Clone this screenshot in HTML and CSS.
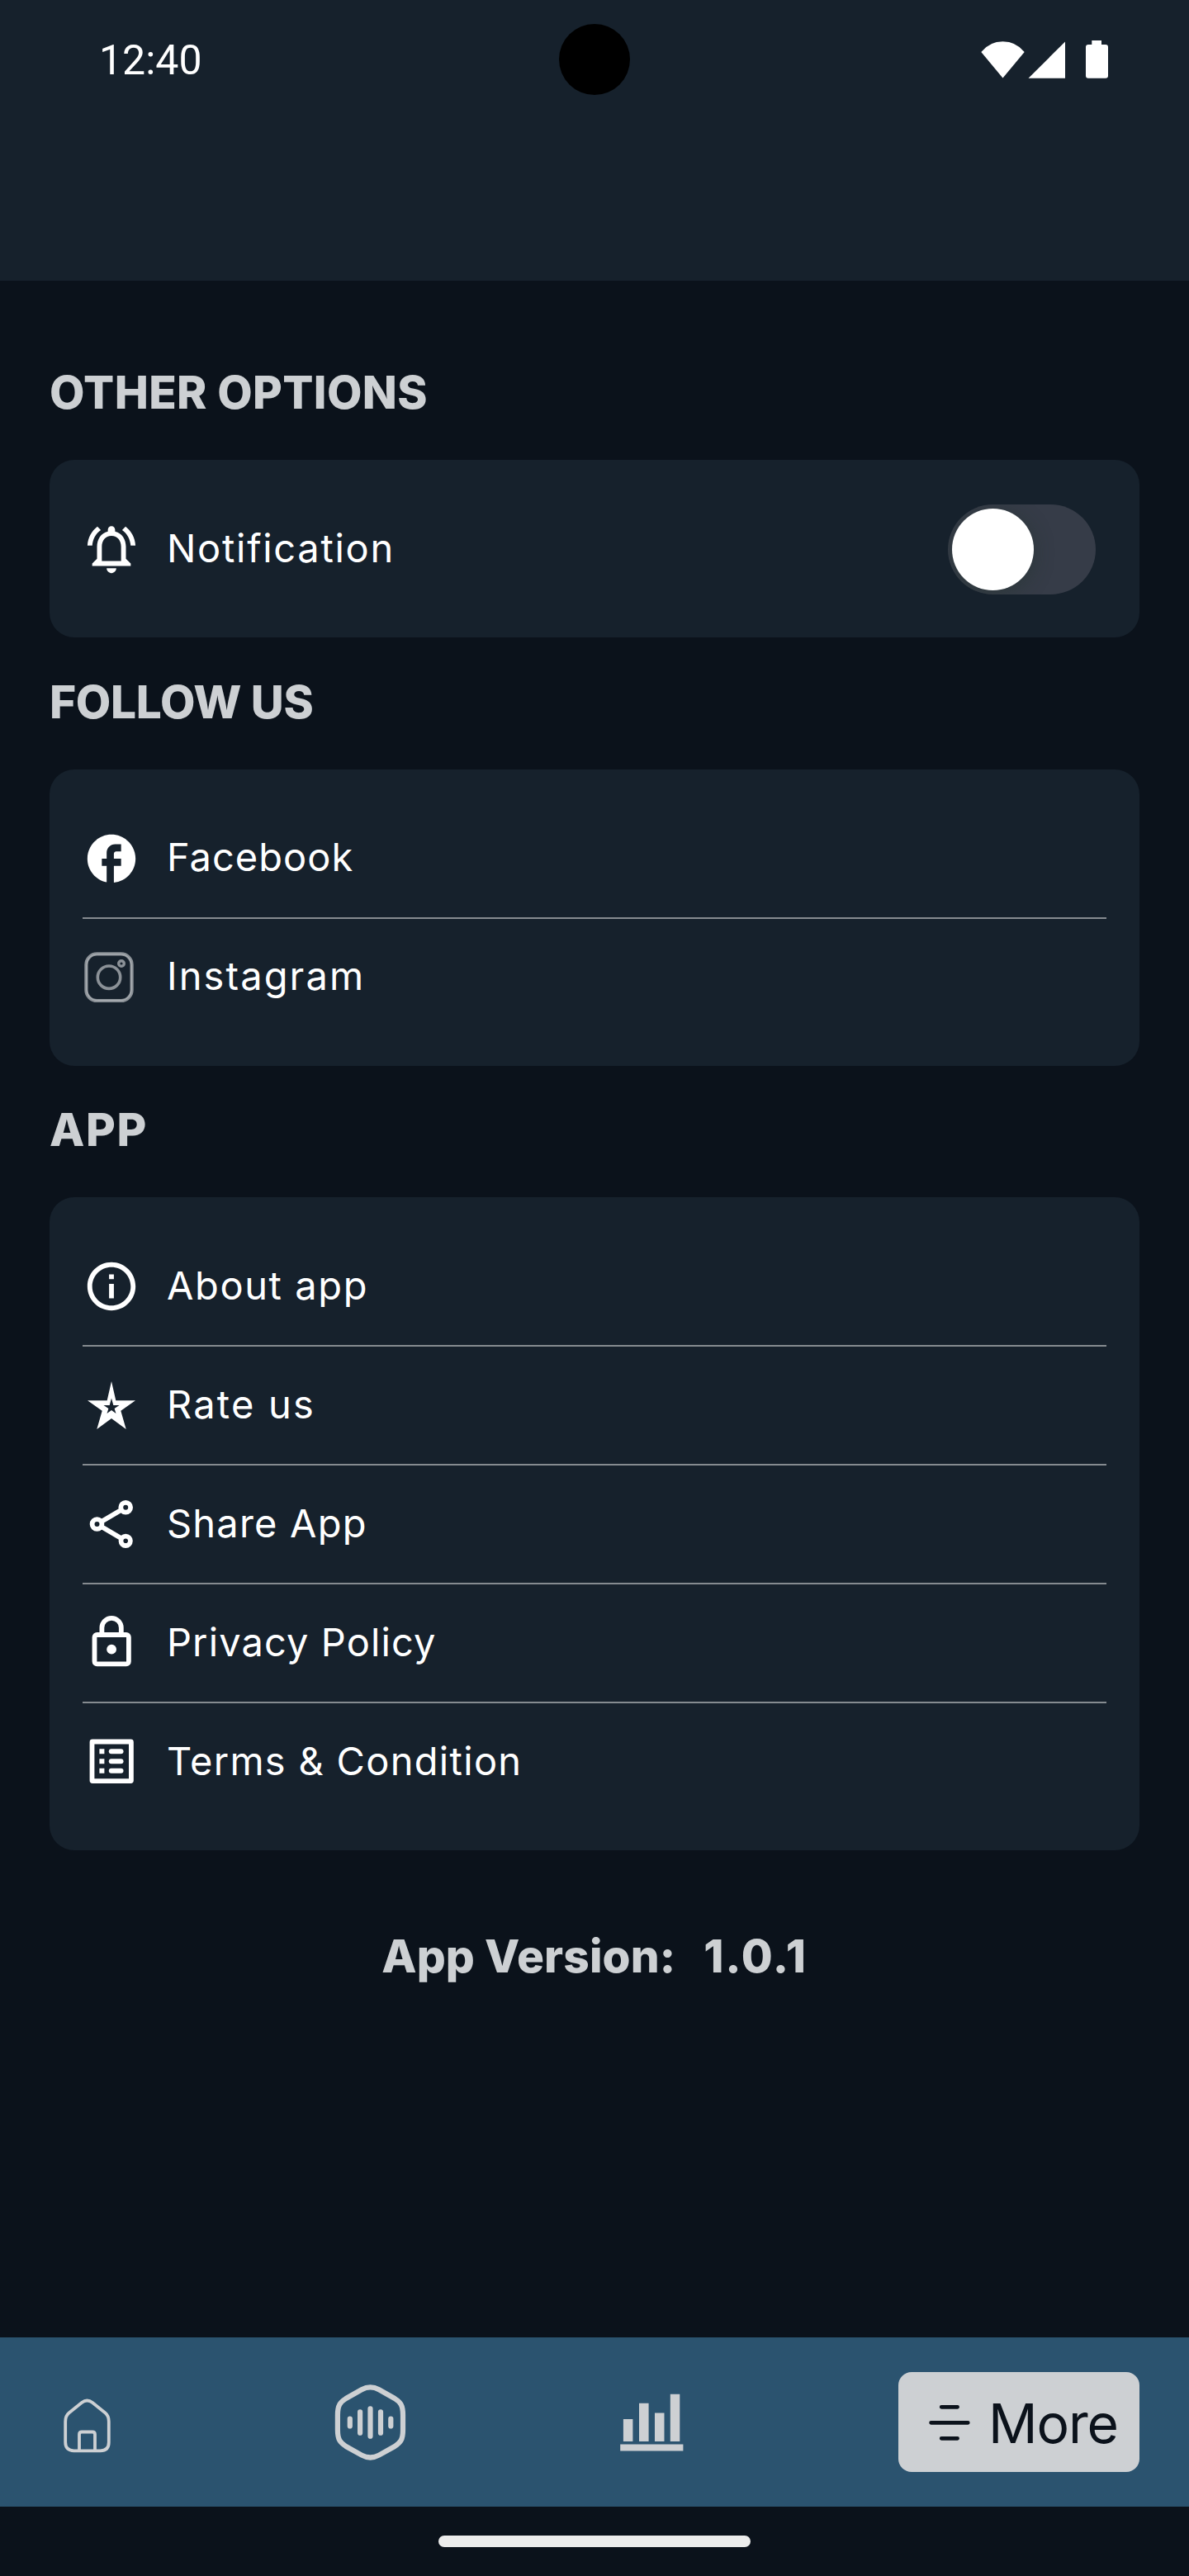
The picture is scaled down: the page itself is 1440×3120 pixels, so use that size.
FILE: index.html
```
<!DOCTYPE html>
<html lang="en">
<head>
<meta charset="utf-8">
<title>More</title>
<link rel="stylesheet" href="styles.css">
</head>
<body>
<div class="screen">
  <header class="top">
    <div class="status">
      <span class="time">12:40</span>
      <svg class="status-icons" width="156" height="50" viewBox="0 0 156 50" fill="#fff">
        <path d="M0.3 16Q10.500 3.300 26.500 3.300T52.700 16L26.500 47.600Z"/>
        <path d="M102 3.500V47.700H57.500Z"/>
        <path d="M134.300 2h11.700v5h5q3 0 3 3v34.700q0 3-3 3h-21q-3 0-3-3V10q0-3 3-3h4.300z"/>
      </svg>
      <div class="camera"></div>
    </div>
  </header>

  <main class="content">
    <h2 class="heading heading-other">OTHER OPTIONS</h2>
    <section class="card">
      <div class="row">
        <svg class="icon" viewBox="0 0 24 24"><path d="M12 22c1.100 0 2-.9 2-2h-4c0 1.100.9 2 2 2zm6-6v-5c0-3.070-1.630-5.640-4.500-6.320V4c0-.83-.67-1.500-1.500-1.500s-1.500.67-1.500 1.500v.68C7.640 5.360 6 7.920 6 11v5l-2 2v1h16v-1l-2-2zm-2 1H8v-6c0-2.480 1.510-4.500 4-4.500s4 2.020 4 4.500v6zM7.580 4.080L6.150 2.650C3.750 4.480 2.170 7.300 2.030 10.500h2c.15-2.650 1.510-4.970 3.550-6.420zm12.390 6.420h2c-.15-3.200-1.730-6.020-4.120-7.850l-1.420 1.430c2.020 1.450 3.390 3.770 3.540 6.420z"/></svg>
        <span class="label label-notification">Notification</span>
        <div class="toggle"><div class="thumb"></div></div>
      </div>
    </section>

    <h2 class="heading heading-follow">FOLLOW US</h2>
    <section class="card">
      <div class="row">
        <svg class="icon" viewBox="0 0 24 24"><path d="M22 12c0-5.520-4.480-10-10-10S2 6.480 2 12c0 4.840 3.440 8.870 8 9.800V15H8v-3h2V9.500C10 7.570 11.570 6 13.500 6H16v3h-2c-.55 0-1 .45-1 1v2h3v3h-3v6.950c5.050-.5 9-4.760 9-9.950z"/></svg>
        <span class="label label-facebook">Facebook</span>
      </div>
      <div class="row">
        <svg class="icon" viewBox="0 0 70 70" fill="none">
          <g fill="none" stroke="#8b9197" stroke-width="4.200">
            <rect x="4.400" y="6.400" width="55.200" height="56.600" rx="13"/>
            <circle cx="32" cy="34.700" r="13.700" stroke-width="3.600"/>
            <circle cx="47" cy="18" r="3.300" stroke-width="3.400"/>
          </g>
          <rect x="4.800" y="6.800" width="54.400" height="55.800" rx="12.600" fill="none" stroke="#b4b8bc" stroke-width="1"/>
        </svg>
        <span class="label label-instagram">Instagram</span>
      </div>
    </section>

    <h2 class="heading heading-app">APP</h2>
    <section class="card">
      <div class="row">
        <svg class="icon" viewBox="0 0 24 24"><path d="M11 7h2v2h-2zm0 4h2v6h-2zm1-9C6.480 2 2 6.480 2 12s4.480 10 10 10 10-4.480 10-10S17.520 2 12 2zm0 18c-4.410 0-8-3.590-8-8s3.590-8 8-8 8 3.590 8 8-3.590 8-8 8z"/></svg>
        <span class="label label-about">About app</span>
      </div>
      <div class="row">
        <svg class="icon" viewBox="0 0 70 70"><path fill-rule="evenodd" d="M35 6L40.300 29.300H64L46.300 41.700L52.700 64L35 51L17.300 64L23.700 41.700L6 29.300H29.700ZM35 26.500L37.300 35H44.500L38.600 39L40.500 45L35 41L29.500 45L31.400 39L25.500 35H32.700Z"/></svg>
        <span class="label label-rate">Rate us</span>
      </div>
      <div class="row">
        <svg class="icon" viewBox="0 0 70 70">
          <g fill="none" stroke="#fff" stroke-width="5.800">
            <path d="M46.500 18L23.200 31.700M46.500 52L23.200 38.300"/>
            <circle cx="52.200" cy="14.700" r="5.900"/>
            <circle cx="17.500" cy="35" r="5.900"/>
            <circle cx="52.200" cy="55.300" r="5.700"/>
          </g>
        </svg>
        <span class="label label-share">Share App</span>
      </div>
      <div class="row">
        <svg class="icon" viewBox="0 0 70 70">
          <g fill="none" stroke="#fff" stroke-width="5.800">
            <rect x="14.500" y="25" width="41.400" height="35.300" rx="3"/>
            <path d="M23.400 25V16.500a11.700 11.700 0 0 1 23.400 0V25"/>
          </g>
          <circle cx="35.100" cy="42.700" r="5.900"/>
        </svg>
        <span class="label label-privacy">Privacy Policy</span>
      </div>
      <div class="row">
        <svg class="icon" viewBox="0 0 70 70">
          <rect x="11.500" y="10.500" width="47.400" height="47.600" rx="0.500" fill="none" stroke="#fff" stroke-width="5.800" stroke-linejoin="round"/>
          <path d="M20.400 19.200h6v6h-6zM20.400 31.200h6v6h-6zM20.400 42.700h6v6h-6z"/>
          <rect x="31.800" y="19.200" width="17.700" height="6" rx="3"/>
          <rect x="31.800" y="31.200" width="17.700" height="6" rx="3"/>
          <rect x="31.800" y="42.700" width="17.700" height="6" rx="3"/>
        </svg>
        <span class="label label-terms">Terms &amp; Condition</span>
      </div>
    </section>

    <p class="version"><span class="version-name">App Version:</span><span class="version-number">1.0.1</span></p>
  </main>

  <nav class="nav">
    <svg width="90" height="90" viewBox="0 0 90 90" fill="none" stroke="#cdd0d3" stroke-width="3.800">
      <path d="M19.200 44Q19.200 37 23.500 33.500L39 21Q45.500 16 52 21L67.500 33.500Q71.800 37 71.800 44V69Q71.800 79.300 61.500 79.300H29.500Q19.200 79.300 19.200 69Z"/>
      <path d="M36 79V59.500Q36 56.500 39 56.500H52Q55 56.500 55 59.500V79"/>
    </svg>
    <svg width="87" height="100" viewBox="0 0 87 100" fill="none" stroke="#cdd0d3" stroke-width="6.200">
      <path d="M3.900 41C3.900 29 7 25.500 14 21L33 10.200Q43.500 4.400 54 10.200L73 21C80 25.500 83 29 83 41V59C83 71 80 74.500 73 79L54 89.600Q43.500 95.400 33 89.600L14 79C7 74.500 3.900 71 3.900 59Z"/>
      <path stroke-linecap="round" d="M18.800 45.600V54.400M31.100 37.300V62.700M43.500 33.300V66.700M56 37.300V62.700M68.300 45.600V54.400"/>
    </svg>
    <svg width="87" height="90" viewBox="0 0 87 90" fill="#cdd0d3">
      <path d="M5.200 71.500H81.400V79.400H5.200ZM8.900 41H20.400V68H8.900ZM28 21.800H39.600V68H28ZM47 33.500H58.500V68H47ZM65.800 10.700H77.300V68H65.800Z"/>
    </svg>
    <div class="more">
      <svg width="60" height="60" viewBox="0 0 60 60" stroke="#0b121b" stroke-width="4.700" stroke-linecap="round">
        <path d="M20.200 11.300H39.600M7.600 30.300H52.300M20.200 49.300H39.600"/>
      </svg>
      <span class="more-label">More</span>
    </div>
  </nav>
  <div class="gesture"><div class="pill"></div></div>
</div>
</body>
</html>
```
FILE: styles.css
```
* {
  box-sizing: border-box;
}

body {
  margin: 0;
  background: #0b121b;
}

.screen {
  display: flex;
  flex-direction: column;
  width: 1440px;
  height: 3120px;
  font-family: Inter, "Liberation Sans", sans-serif;
  color: #fff;
}

.top {
  height: 340px;
  background: #16212c;
}

.status {
  position: relative;
  display: flex;
  align-items: center;
  justify-content: space-between;
  height: 144px;
  padding: 0 96px 0 120px;
}

.time {
  padding-top: 1px;
  font: 400 50px/60px Roboto, sans-serif;
}

.camera {
  position: absolute;
  left: 677px;
  top: 29px;
  width: 86px;
  height: 86px;
  border-radius: 50%;
  background: #000;
}

.content {
  flex: 1;
  padding: 102px 60px 0;
}

.heading {
  margin: 0 0 49px;
  font-size: 55px;
  font-weight: 800;
  line-height: 66px;
  color: #cdd0d3;
}

.heading-other {
  letter-spacing: 0.35px;
}

.heading-follow {
  letter-spacing: -0.35px;
}

.heading-app {
  letter-spacing: 1.6px;
}

.card {
  margin-bottom: 44.5px;
  padding: 37px 40px 36px;
  border-radius: 30px;
  background: #16212c;
}

.row {
  display: flex;
  align-items: center;
  gap: 32px;
  height: 142px;
}

.row + .row {
  height: 144px;
  border-top: 2px solid #858b90;
}

.icon {
  flex: none;
  width: 70px;
  height: 70px;
  fill: #fff;
}

.label {
  padding-bottom: 3px;
  font-size: 47px;
  font-weight: 440;
  line-height: 56px;
  white-space: nowrap;
}

.label-notification {
  letter-spacing: 1.7px;
}

.label-facebook {
  letter-spacing: 1px;
}

.label-instagram {
  letter-spacing: 2.1px;
}

.label-about {
  letter-spacing: 1.6px;
}

.label-rate {
  letter-spacing: 2.2px;
}

.label-share {
  letter-spacing: 1.2px;
}

.label-privacy {
  letter-spacing: 1.1px;
}

.label-terms {
  letter-spacing: 1.3px;
}

.toggle {
  width: 179px;
  height: 109px;
  margin: 0 13px 0 auto;
  padding: 5px;
  border-radius: 55px;
  overflow: hidden;
  background: #363c48;
}

.thumb {
  width: 99px;
  height: 99px;
  border-radius: 50%;
  background: #fff;
  box-shadow: 0 4px 24px rgba(30, 50, 40, 0.45);
}

.version {
  display: flex;
  justify-content: center;
  gap: 34px;
  margin: 95px 0 0;
  font-size: 55px;
  font-weight: 800;
  line-height: 66px;
  color: #cdd0d3;
}

.version-name {
  letter-spacing: 0.1px;
}

.version-number {
  letter-spacing: 1.7px;
}

.nav {
  display: flex;
  align-items: center;
  justify-content: space-between;
  height: 205px;
  padding: 0 60px;
  background: #2b536f;
}

.more {
  display: flex;
  align-items: center;
  gap: 17px;
  width: 292px;
  height: 121px;
  padding-left: 32px;
  border-radius: 16px;
  background: #cdd0d3;
}

.more-label {
  padding-top: 3px;
  font-size: 66px;
  line-height: 80px;
  letter-spacing: -1.1px;
  color: #0b121b;
}

.gesture {
  display: flex;
  justify-content: center;
  height: 84px;
  padding-top: 35px;
}

.pill {
  width: 378px;
  height: 14px;
  border-radius: 7px;
  background: #ececec;
}
```
